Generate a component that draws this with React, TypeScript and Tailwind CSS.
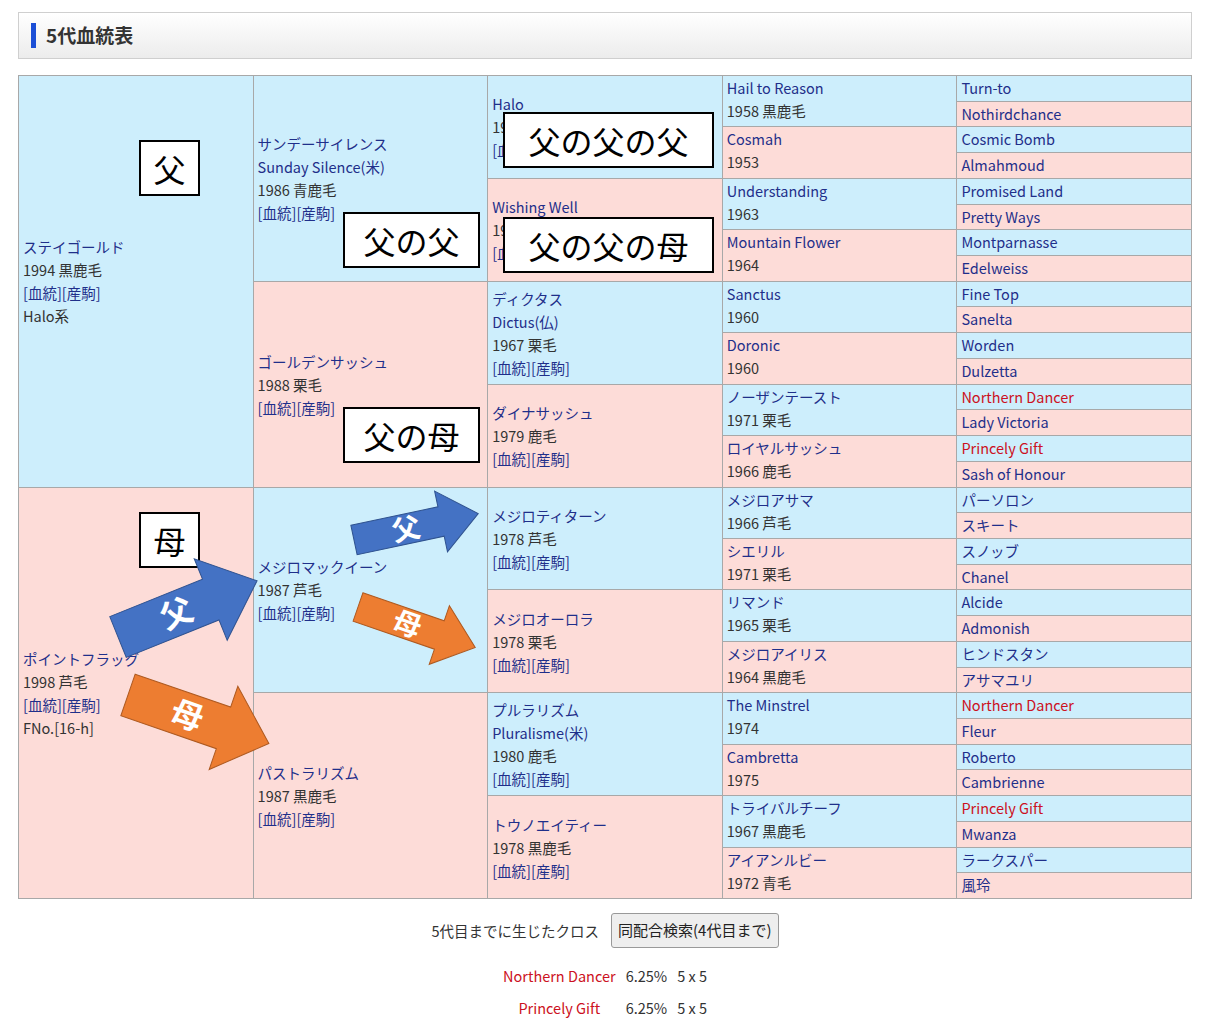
import React from 'react'

type Horse = { name: string; en?: string; info?: string; links?: boolean; extra?: string; red?: boolean }

const FONT = { fontFamily: '"Noto Sans CJK JP", "Noto Sans", sans-serif' }

const gen1: Horse[] = [
  { name: 'ステイゴールド', info: '1994 黒鹿毛', links: true, extra: 'Halo系' },
  { name: 'ポイントフラッグ', info: '1998 芦毛', links: true, extra: 'FNo.[16-h]' },
]
const gen2: Horse[] = [
  { name: 'サンデーサイレンス', en: 'Sunday Silence(米)', info: '1986 青鹿毛', links: true },
  { name: 'ゴールデンサッシュ', info: '1988 栗毛', links: true },
  { name: 'メジロマックイーン', info: '1987 芦毛', links: true },
  { name: 'パストラリズム', info: '1987 黒鹿毛', links: true },
]
const gen3: Horse[] = [
  { name: 'Halo', info: '1969 黒鹿毛', links: true },
  { name: 'Wishing Well', info: '1975 鹿毛', links: true },
  { name: 'ディクタス', en: 'Dictus(仏)', info: '1967 栗毛', links: true },
  { name: 'ダイナサッシュ', info: '1979 鹿毛', links: true },
  { name: 'メジロティターン', info: '1978 芦毛', links: true },
  { name: 'メジロオーロラ', info: '1978 栗毛', links: true },
  { name: 'プルラリズム', en: 'Pluralisme(米)', info: '1980 鹿毛', links: true },
  { name: 'トウノエイティー', info: '1978 黒鹿毛', links: true },
]
const gen4: Horse[] = [
  { name: 'Hail to Reason', info: '1958 黒鹿毛' },
  { name: 'Cosmah', info: '1953' },
  { name: 'Understanding', info: '1963' },
  { name: 'Mountain Flower', info: '1964' },
  { name: 'Sanctus', info: '1960' },
  { name: 'Doronic', info: '1960' },
  { name: 'ノーザンテースト', info: '1971 栗毛' },
  { name: 'ロイヤルサッシュ', info: '1966 鹿毛' },
  { name: 'メジロアサマ', info: '1966 芦毛' },
  { name: 'シエリル', info: '1971 栗毛' },
  { name: 'リマンド', info: '1965 栗毛' },
  { name: 'メジロアイリス', info: '1964 黒鹿毛' },
  { name: 'The Minstrel', info: '1974' },
  { name: 'Cambretta', info: '1975' },
  { name: 'トライバルチーフ', info: '1967 黒鹿毛' },
  { name: 'アイアンルビー', info: '1972 青毛' },
]
const gen5: Horse[] = [
  'Turn-to', 'Nothirdchance', 'Cosmic Bomb', 'Almahmoud', 'Promised Land', 'Pretty Ways', 'Montparnasse', 'Edelweiss',
  'Fine Top', 'Sanelta', 'Worden', 'Dulzetta', '*Northern Dancer', 'Lady Victoria', '*Princely Gift', 'Sash of Honour',
  'パーソロン', 'スキート', 'スノッブ', 'Chanel', 'Alcide', 'Admonish', 'ヒンドスタン', 'アサマユリ',
  '*Northern Dancer', 'Fleur', 'Roberto', 'Cambrienne', '*Princely Gift', 'Mwanza', 'ラークスパー', '風玲',
].map(n => (n.startsWith('*') ? { name: n.slice(1), red: true } : { name: n }))

const gens = [gen1, gen2, gen3, gen4, gen5]

function Cell({ h, col, idx }: { h: Horse; col: number; idx: number }) {
  const span = 32 / gens[col].length
  const bg = idx % 2 === 0 ? 'bg-[#cdeefc]' : 'bg-[#fddcd8]'
  const align = col <= 2 ? 'justify-center' : 'justify-start'
  return (
    <div
      className={`${bg} flex flex-col ${align} px-[4px] text-[14.5px] leading-[23px] text-[#333]`}
      style={{ gridColumn: col + 1, gridRow: `${idx * span + 1} / span ${span}` }}
    >
      <div className={h.red ? 'text-[#cc1122]' : 'text-[#1f2f8a]'}>{h.name}</div>
      {h.en && <div className="text-[#1f2f8a]">{h.en}</div>}
      {h.info && <div>{h.info}</div>}
      {h.links && <div className="text-[#1f2f8a]">[血統][産駒]</div>}
      {h.extra && <div>{h.extra}</div>}
    </div>
  )
}

function Label({ text, x, y, w, h }: { text: string; x: number; y: number; w: number; h: number }) {
  return (
    <div
      className="absolute flex items-center justify-center border-2 border-black bg-white text-[32px] leading-none text-black"
      style={{ left: x, top: y, width: w, height: h }}
    >
      {text}
    </div>
  )
}

function Arrow({ x, y, len, angle, b, hw, hl, color, stroke, label, size }: {
  x: number; y: number; len: number; angle: number; b: number; hw: number; hl: number
  color: string; stroke: string; label: string; size: number
}) {
  const pts = [[0, -b], [len - hl, -b], [len - hl, -hw], [len, 0], [len - hl, hw], [len - hl, b], [0, b]]
    .map(p => p.join(',')).join(' ')
  return (
    <g transform={`translate(${x} ${y}) rotate(${angle})`}>
      <polygon points={pts} fill={color} stroke={stroke} strokeWidth={1} />
      <text x={len * 0.42} y={size * 0.36} textAnchor="middle" fontSize={size} fontWeight={700} fill="#fff"
        fontFamily='"Noto Sans CJK JP", sans-serif'>{label}</text>
    </g>
  )
}

export default function App() {
  return (
    <div className="relative h-[1024px] w-[1216px] bg-white" style={FONT}>
      <div className="pt-[12px] pl-[18px] pr-[24px]">
        <div className="flex h-[47px] items-center border border-[#cfcfcf] bg-gradient-to-b from-white to-[#ececec] px-[12px]">
          <div className="h-[25px] w-[5px] bg-[#1c4fd6]" />
          <div className="ml-[10px] text-[19px] font-bold text-[#333]">5代血統表</div>
        </div>
        <div className="mt-[16px] grid h-[824px] grid-cols-5 gap-px bg-[#a8a8a8] p-px" style={{ gridTemplateRows: 'repeat(32, minmax(0, 1fr))' }}>
          {gens.map((g, col) => g.map((h, idx) => <Cell key={`${col}-${idx}`} h={h} col={col} idx={idx} />))}
        </div>
        <div className="mt-[14px] flex items-center justify-center gap-[12px] text-[14.5px] text-[#333]">
          <span>5代目までに生じたクロス</span>
          <button className="h-[35px] rounded-[3px] border border-[#999] bg-[#eeeeee] px-[6px] text-[15px] text-[#222]">同配合検索(4代目まで)</button>
        </div>
        <div className="mt-[16px] flex justify-center">
          <div className="grid grid-cols-[auto_auto_auto] gap-x-[10px] gap-y-[8px] text-[14.5px] leading-[24px] text-[#333]">
            <span className="text-center text-[#cc1122]">Northern Dancer</span><span>6.25%</span><span>5 x 5</span>
            <span className="text-center text-[#cc1122]">Princely Gift</span><span>6.25%</span><span>5 x 5</span>
          </div>
        </div>
      </div>

      <div className="pointer-events-none absolute inset-0">
        <Label text="父" x={139} y={140} w={61} h={56} />
        <Label text="父の父" x={343} y={212} w={137} h={56} />
        <Label text="父の父の父" x={503} y={112} w={211} h={56} />
        <Label text="父の父の母" x={503} y={217} w={211} h={56} />
        <Label text="父の母" x={343} y={407} w={137} h={56} />
        <Label text="母" x={139} y={512} w={61} h={56} />
        <svg className="absolute left-0 top-0" width={1216} height={1024}>
          <Arrow x={118} y={637} len={150} angle={-22} b={22} hw={44} hl={50} color="#4472c4" stroke="#2f528f" label="父" size={32} />
          <Arrow x={128} y={695} len={149} angle={19} b={22} hw={44} hl={48} color="#ed7d31" stroke="#ae5a21" label="母" size={32} />
          <Arrow x={354} y={540} len={127} angle={-12} b={15} hw={31} hl={38} color="#4472c4" stroke="#2f528f" label="父" size={28} />
          <Arrow x={358} y={607} len={124} angle={19} b={15} hw={31} hl={38} color="#ed7d31" stroke="#ae5a21" label="母" size={28} />
        </svg>
      </div>
    </div>
  )
}
